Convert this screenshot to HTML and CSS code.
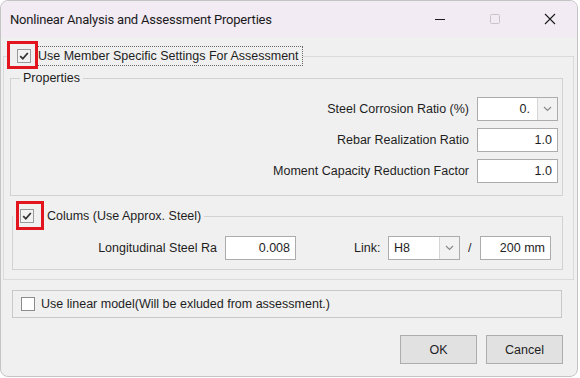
FILE: index.html
```html
<!DOCTYPE html>
<html lang="en">
<head>
	<meta charset="UTF-8">
	<title>Nonlinear Analysis and Assessment Properties</title>
	<link rel="stylesheet" href="styles.css">
</head>
<body>
	<div class="window">
		<div class="titlebar">
			<span class="title">Nonlinear Analysis and Assessment Properties</span>
			<div class="caption">
				<span class="cap"><svg width="12" height="12" viewBox="0 0 12 12"><path d="M1 6.5h10" stroke="#1b1b1b" stroke-width="1"/></svg></span>
				<span class="cap"><svg width="12" height="12" viewBox="0 0 12 12"><rect x="1.5" y="1.5" width="9" height="9" rx="1" fill="none" stroke="#c6c6c6" stroke-width="1"/></svg></span>
				<span class="cap"><svg width="12" height="12" viewBox="0 0 12 12"><path d="M1 1l10 10M11 1L1 11" stroke="#1b1b1b" stroke-width="1.1"/></svg></span>
			</div>
		</div>

		<div class="content">
			<fieldset class="group outer">
				<legend class="check-legend first">
					<span class="check checked">
						<svg width="12" height="12" viewBox="0 0 12 12"><path d="M2.2 6.2l2.6 2.6 5-5.8" fill="none" stroke="#333" stroke-width="1.8"/></svg>
						<span class="mark mark-one"></span>
					</span>
					<span class="focus-label">Use Member Specific Settings For Assessment</span>
				</legend>

				<fieldset class="group props">
					<legend class="plain-legend">Properties</legend>
					<div class="prop-row">
						<span>Steel Corrosion Ratio (%)</span>
						<div class="combo">
							<span class="combo-text">0.</span>
							<span class="combo-btn"><svg width="9" height="6" viewBox="0 0 9 6"><path d="M1 1l3.5 3.5L8 1" fill="none" stroke="#8a8a8a" stroke-width="1.2"/></svg></span>
						</div>
					</div>
					<div class="prop-row">
						<span>Rebar Realization Ratio</span>
						<div class="field">1.0</div>
					</div>
					<div class="prop-row">
						<span>Moment Capacity Reduction Factor</span>
						<div class="field">1.0</div>
					</div>
				</fieldset>

				<fieldset class="group colums">
					<legend class="check-legend second">
						<span class="check checked">
							<svg width="12" height="12" viewBox="0 0 12 12"><path d="M2.2 6.2l2.6 2.6 5-5.8" fill="none" stroke="#333" stroke-width="1.8"/></svg>
							<span class="mark mark-two"></span>
						</span>
						<span class="colums-label">Colums (Use Approx. Steel)</span>
					</legend>
					<div class="colums-row">
						<span class="long-label">Longitudinal Steel Ra</span>
						<div class="field small">0.008</div>
						<span class="link-label">Link:</span>
						<div class="combo small left">
							<span class="combo-text">H8</span>
							<span class="combo-btn"><svg width="9" height="6" viewBox="0 0 9 6"><path d="M1 1l3.5 3.5L8 1" fill="none" stroke="#8a8a8a" stroke-width="1.2"/></svg></span>
						</div>
						<span class="slash">/</span>
						<div class="field small">200 mm</div>
					</div>
				</fieldset>
			</fieldset>

			<div class="linear-box">
				<span class="check"></span>
				<span class="linear-label">Use linear model(Will be exluded from assessment.)</span>
			</div>

			<div class="buttons">
				<button type="button">OK</button>
				<button type="button">Cancel</button>
			</div>
		</div>
	</div>
</body>
</html>
```

FILE: styles.css
```css
body{
	margin: 0;
	background: #fff;
	font-family: "Liberation Sans", Arial, sans-serif;
	font-size: 12.5px;
	color: #1e1e1e;
}

.window{
	width: 578px;
	height: 377px;
	box-sizing: border-box;
	border: 1px solid #c4c4c4;
	border-radius: 8px;
	overflow: hidden;
	background: #f0f0f0;
	display: flex;
	flex-direction: column;
}

.titlebar{
	height: 36px;
	flex: none;
	background: #f3ebf4;
	display: flex;
	align-items: center;
	padding-left: 9px;
}
.title{
	flex: 1;
	font-family: Roboto, "Noto Sans", sans-serif;
	font-size: 13px;
	letter-spacing: -0.2px;
	color: #1a1a1a;
}
.caption{
	display: flex;
}
.cap{
	width: 55px;
	height: 36px;
	display: flex;
	align-items: center;
	justify-content: center;
}

.content{
	flex: 1;
	padding: 9px 3px 0 2px;
}

/* group boxes */
.group{
	margin: 0;
	min-width: 0;
	border: 1px solid #d2d2d2;
}
.outer{
	padding: 4px 10px 9px 6px;
	border-color: #dadada;
}
.props{
	padding: 11px 4px 12px 9px;
}
.colums{
	margin: 10px 0 0 2px;
	padding: 10px 9px 9px 0;
}

.plain-legend{
	padding: 0 3px;
	line-height: 16px;
}
.check-legend{
	padding: 0;
	height: 20px;
	display: flex;
	align-items: center;
}
.check-legend.first{
	padding-left: 7px;
}
.check-legend.second{
	padding: 0 3px 0 7px;
}

.check{
	position: relative;
	width: 14px;
	height: 14px;
	box-sizing: border-box;
	border: 1px solid #8c8c8c;
	background: #fff;
	display: flex;
	align-items: center;
	justify-content: center;
}
.check.checked{
	background: #f2f2f2;
	border-color: #9a9a9a;
}

/* red annotation boxes over the checkboxes */
.mark{
	position: absolute;
	border: 3px solid #e2141d;
	box-sizing: border-box;
}
.mark-one{
	left: -11px;
	top: -9px;
	width: 31px;
	height: 28px;
}
.mark-two{
	left: -5px;
	top: -9px;
	width: 28px;
	height: 29px;
}

.focus-label{
	margin-left: 5px;
	padding: 1px 3px 1px 1px;
	border: 1px dotted #666;
	line-height: 16px;
}
.colums-label{
	margin-left: 13px;
}

.prop-row{
	display: flex;
	justify-content: flex-end;
	align-items: center;
	gap: 8px;
	height: 24px;
}
.prop-row + .prop-row{
	margin-top: 7px;
}

.field{
	width: 81px;
	height: 24px;
	box-sizing: border-box;
	border: 1px solid #acacac;
	background: #fff;
	text-align: right;
	padding-right: 5px;
	line-height: 22px;
}
.field.small{
	width: 71px;
}

.combo{
	width: 81px;
	height: 24px;
	box-sizing: border-box;
	border: 1px solid #acacac;
	background: #fff;
	display: flex;
	line-height: 22px;
}
.combo.small{
	width: 72px;
}
.combo-text{
	flex: 1;
	text-align: right;
	padding-right: 7px;
}
.combo.left .combo-text{
	text-align: left;
	padding-left: 5px;
}
.combo-btn{
	width: 19px;
	border-left: 1px solid #d6d6d6;
	background: #f2f2f2;
	display: flex;
	align-items: center;
	justify-content: center;
}

.colums-row{
	display: flex;
	align-items: center;
	height: 24px;
}
.long-label{
	width: 204px;
	text-align: right;
	margin-right: 8px;
}
.link-label{
	width: 27px;
	margin-left: 58px;
	margin-right: 7px;
}
.slash{
	width: 5px;
	margin: 0 7px 0 8px;
}

.linear-box{
	margin: 10px 0 0 9px;
	width: 550px;
	height: 28px;
	box-sizing: border-box;
	border: 1px solid #c8c8c8;
	display: flex;
	align-items: center;
	padding-left: 8px;
}
.linear-label{
	margin-left: 6px;
}

.buttons{
	display: flex;
	justify-content: flex-end;
	gap: 9px;
	margin-top: 17px;
	padding-right: 11px;
}
button{
	width: 77px;
	height: 29px;
	font-family: inherit;
	font-size: 12.5px;
	color: #1e1e1e;
	background: #e1e1e1;
	border: 1px solid #adadad;
	border-radius: 0;
}
```
